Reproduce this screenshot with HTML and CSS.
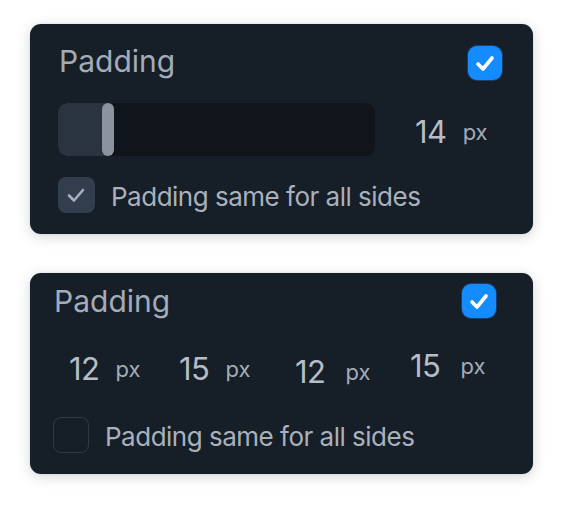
FILE: index.html
```html
<!DOCTYPE html>
<html>
<head>
<meta charset="utf-8">
<link rel="stylesheet" href="styles.css">
</head>
<body>
<div class="page">
  <section class="card card-slider">
    <div class="head">
      <span class="title">Padding</span>
      <span class="cb cb-on"><svg viewBox="0 0 34 34" width="34" height="34"><polyline points="10,18 15,23 24,12" fill="none" stroke="#fff" stroke-width="3.6" stroke-linecap="round" stroke-linejoin="round"/></svg></span>
    </div>
    <div class="slider-row">
      <div class="track">
        <div class="fill" style="width:50px"></div>
        <div class="thumb"></div>
      </div>
      <div class="value"><span class="num">14</span><span class="unit">px</span></div>
    </div>
    <div class="same">
      <span class="cb cb-muted"><svg viewBox="0 0 37 36" width="37" height="36"><polyline points="11,18.5 16,23.5 25,13" fill="none" stroke="#a7afba" stroke-width="2.6" stroke-linecap="round" stroke-linejoin="round"/></svg></span>
      <span class="label">Padding same for all sides</span>
    </div>
  </section>

  <section class="card card-sides">
    <div class="head">
      <span class="title">Padding</span>
      <span class="cb cb-on"><svg viewBox="0 0 34 34" width="34" height="34"><polyline points="10,18 15,23 24,12" fill="none" stroke="#fff" stroke-width="3.6" stroke-linecap="round" stroke-linejoin="round"/></svg></span>
    </div>
    <div class="sides">
      <div class="value"><span class="num">12</span><span class="unit">px</span></div>
      <div class="value"><span class="num">15</span><span class="unit">px</span></div>
      <div class="value value-low value-wide"><span class="num">12</span><span class="unit">px</span></div>
      <div class="value value-high value-wide"><span class="num">15</span><span class="unit">px</span></div>
    </div>
    <div class="same">
      <span class="cb cb-off"></span>
      <span class="label">Padding same for all sides</span>
    </div>
  </section>
</div>
</body>
</html>
```

FILE: styles.css
```css
* { box-sizing: border-box; }

html, body {
  margin: 0;
  padding: 0;
  background: #ffffff;
}

body {
  font-family: "Inter", "Liberation Sans", sans-serif;
  color: #a9b1bd;
}

.page {
  width: 567px;
  height: 518px;
  padding: 24px 0 0 30px;
  display: flex;
  flex-direction: column;
  gap: 39px;
}

.card {
  width: 503px;
  background: #161e28;
  border-radius: 11px;
  box-shadow: 0 3px 14px rgba(0, 0, 0, 0.16), 0 0 2px rgba(0, 0, 0, 0.12);
  display: flex;
  flex-direction: column;
}

.card-slider {
  height: 210px;
  padding: 19px 31px 21px 28px;
}

.card-sides {
  height: 201px;
  padding: 10px 37px 21px 23px;
}

.head {
  display: flex;
  align-items: center;
  justify-content: space-between;
  height: 36px;
}

.title {
  font-size: 30px;
  line-height: 36px;
  color: #a3acb8;
  padding-left: 1px;
}

.card-slider .head .cb-on { margin-top: 4px; }

.cb {
  display: flex;
  align-items: center;
  justify-content: center;
  flex: none;
}

.cb svg { display: block; }

.cb-on {
  width: 34px;
  height: 34px;
  border-radius: 9px;
  background: #148bff;
  box-shadow: 0 0 0 1px rgba(40, 90, 150, 0.55);
}

.cb-muted {
  width: 37px;
  height: 36px;
  border-radius: 8px;
  background: #323e4d;
}

.cb-off {
  width: 36px;
  height: 36px;
  border-radius: 8px;
  border: 1.5px solid #2f3a48;
}

.slider-row {
  display: flex;
  align-items: center;
  margin-top: 24px;
  height: 53px;
}

.track {
  position: relative;
  width: 317px;
  height: 53px;
  border-radius: 9px;
  background: #10151b;
  overflow: hidden;
  flex: none;
}

.fill {
  height: 100%;
  background: #2a3441;
  border-radius: 9px 0 0 9px;
}

.thumb {
  position: absolute;
  left: 44px;
  top: 0;
  width: 12px;
  height: 53px;
  border-radius: 6px;
  background: #8b939e;
}

.value {
  display: flex;
  align-items: baseline;
}

.slider-row .value {
  margin-left: 40px;
  margin-top: 4px;
}

.num {
  font-size: 31px;
  line-height: 36px;
  color: #b6bdc7;
  letter-spacing: -0.5px;
}

.unit {
  font-size: 22px;
  color: #a3acb8;
  margin-left: 16px;
  position: relative;
  top: -3px;
}

.value-wide .unit { margin-left: 20px; }

.sides {
  display: grid;
  grid-template-columns: 110px 116px 115px auto;
  margin-top: 32px;
  padding-left: 16px;
  height: 36px;
}

.value-low { margin-top: 3px; }
.value-high { margin-top: -3px; }

.same {
  display: flex;
  align-items: center;
  gap: 16px;
}

.card-slider .same { margin-top: 21px; }
.card-sides .same { margin-top: 30px; }

.label {
  font-size: 26px;
  line-height: 36px;
  color: #a9b1bd;
  letter-spacing: -0.5px;
  position: relative;
  top: 2px;
}
```
